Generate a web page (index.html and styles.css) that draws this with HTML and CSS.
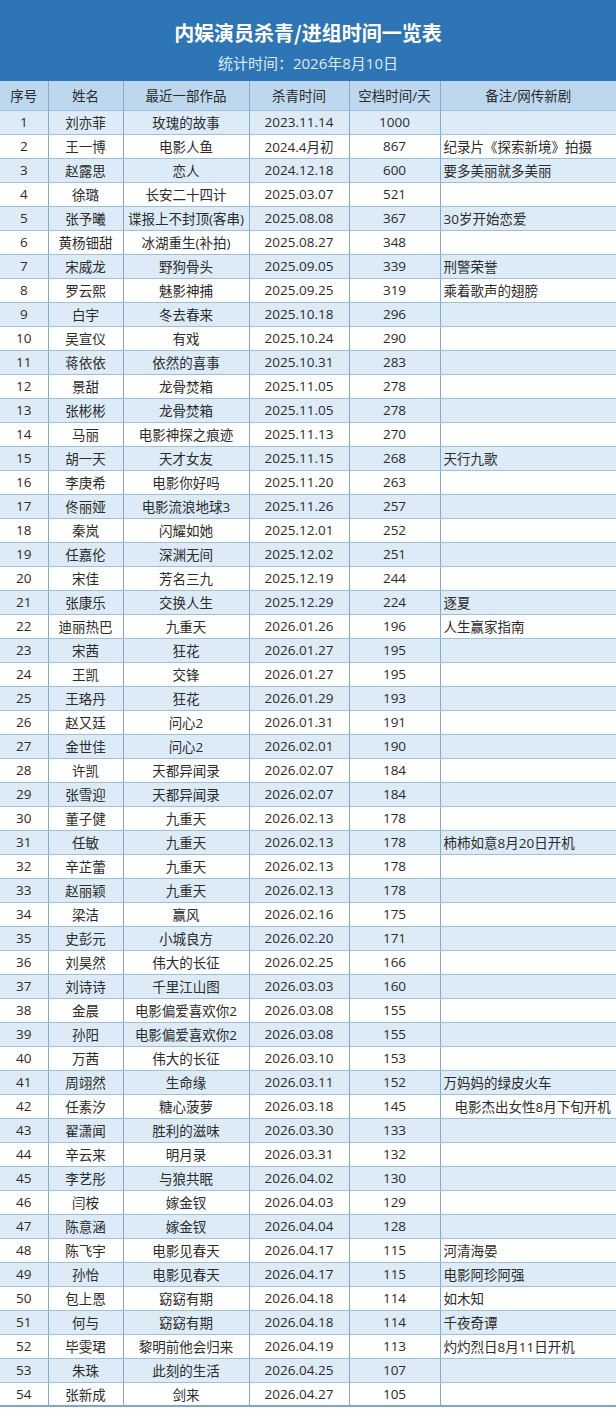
FILE: index.html
```html
<!DOCTYPE html>
<html lang="zh-CN">
<head>
<meta charset="utf-8">
<title>内娱演员杀青/进组时间一览表</title>
<link rel="stylesheet" href="styles.css">
</head>
<body>
<div class="sheet">
  <header class="banner">
    <h1 class="title">内娱演员杀青/进组时间一览表</h1>
    <p class="subtitle">统计时间：2026年8月10日</p>
  </header>
  <table class="grid">
    <colgroup>
      <col class="c-no"><col class="c-name"><col class="c-work"><col class="c-date"><col class="c-gap"><col class="c-note">
    </colgroup>
    <thead>
      <tr><th>序号</th><th>姓名</th><th>最近一部作品</th><th>杀青时间</th><th>空档时间/天</th><th>备注/网传新剧</th></tr>
    </thead>
    <tbody>
      <tr><td>1</td><td>刘亦菲</td><td>玫瑰的故事</td><td>2023.11.14</td><td>1000</td><td class="note"></td></tr>
      <tr><td>2</td><td>王一博</td><td>电影人鱼</td><td>2024.4月初</td><td>867</td><td class="note">纪录片《探索新境》拍摄</td></tr>
      <tr><td>3</td><td>赵露思</td><td>恋人</td><td>2024.12.18</td><td>600</td><td class="note">要多美丽就多美丽</td></tr>
      <tr><td>4</td><td>徐璐</td><td>长安二十四计</td><td>2025.03.07</td><td>521</td><td class="note"></td></tr>
      <tr><td>5</td><td>张予曦</td><td>谍报上不封顶(客串)</td><td>2025.08.08</td><td>367</td><td class="note">30岁开始恋爱</td></tr>
      <tr><td>6</td><td>黄杨钿甜</td><td>冰湖重生(补拍)</td><td>2025.08.27</td><td>348</td><td class="note"></td></tr>
      <tr><td>7</td><td>宋威龙</td><td>野狗骨头</td><td>2025.09.05</td><td>339</td><td class="note">刑警荣誉</td></tr>
      <tr><td>8</td><td>罗云熙</td><td>魅影神捕</td><td>2025.09.25</td><td>319</td><td class="note">乘着歌声的翅膀</td></tr>
      <tr><td>9</td><td>白宇</td><td>冬去春来</td><td>2025.10.18</td><td>296</td><td class="note"></td></tr>
      <tr><td>10</td><td>吴宣仪</td><td>有戏</td><td>2025.10.24</td><td>290</td><td class="note"></td></tr>
      <tr><td>11</td><td>蒋依依</td><td>依然的喜事</td><td>2025.10.31</td><td>283</td><td class="note"></td></tr>
      <tr><td>12</td><td>景甜</td><td>龙骨焚箱</td><td>2025.11.05</td><td>278</td><td class="note"></td></tr>
      <tr><td>13</td><td>张彬彬</td><td>龙骨焚箱</td><td>2025.11.05</td><td>278</td><td class="note"></td></tr>
      <tr><td>14</td><td>马丽</td><td>电影神探之痕迹</td><td>2025.11.13</td><td>270</td><td class="note"></td></tr>
      <tr><td>15</td><td>胡一天</td><td>天才女友</td><td>2025.11.15</td><td>268</td><td class="note">天行九歌</td></tr>
      <tr><td>16</td><td>李庚希</td><td>电影你好吗</td><td>2025.11.20</td><td>263</td><td class="note"></td></tr>
      <tr><td>17</td><td>佟丽娅</td><td>电影流浪地球3</td><td>2025.11.26</td><td>257</td><td class="note"></td></tr>
      <tr><td>18</td><td>秦岚</td><td>闪耀如她</td><td>2025.12.01</td><td>252</td><td class="note"></td></tr>
      <tr><td>19</td><td>任嘉伦</td><td>深渊无间</td><td>2025.12.02</td><td>251</td><td class="note"></td></tr>
      <tr><td>20</td><td>宋佳</td><td>芳名三九</td><td>2025.12.19</td><td>244</td><td class="note"></td></tr>
      <tr><td>21</td><td>张康乐</td><td>交换人生</td><td>2025.12.29</td><td>224</td><td class="note">逐夏</td></tr>
      <tr><td>22</td><td>迪丽热巴</td><td>九重天</td><td>2026.01.26</td><td>196</td><td class="note">人生赢家指南</td></tr>
      <tr><td>23</td><td>宋茜</td><td>狂花</td><td>2026.01.27</td><td>195</td><td class="note"></td></tr>
      <tr><td>24</td><td>王凯</td><td>交锋</td><td>2026.01.27</td><td>195</td><td class="note"></td></tr>
      <tr><td>25</td><td>王珞丹</td><td>狂花</td><td>2026.01.29</td><td>193</td><td class="note"></td></tr>
      <tr><td>26</td><td>赵又廷</td><td>问心2</td><td>2026.01.31</td><td>191</td><td class="note"></td></tr>
      <tr><td>27</td><td>金世佳</td><td>问心2</td><td>2026.02.01</td><td>190</td><td class="note"></td></tr>
      <tr><td>28</td><td>许凯</td><td>天都异闻录</td><td>2026.02.07</td><td>184</td><td class="note"></td></tr>
      <tr><td>29</td><td>张雪迎</td><td>天都异闻录</td><td>2026.02.07</td><td>184</td><td class="note"></td></tr>
      <tr><td>30</td><td>董子健</td><td>九重天</td><td>2026.02.13</td><td>178</td><td class="note"></td></tr>
      <tr><td>31</td><td>任敏</td><td>九重天</td><td>2026.02.13</td><td>178</td><td class="note">柿柿如意8月20日开机</td></tr>
      <tr><td>32</td><td>辛芷蕾</td><td>九重天</td><td>2026.02.13</td><td>178</td><td class="note"></td></tr>
      <tr><td>33</td><td>赵丽颖</td><td>九重天</td><td>2026.02.13</td><td>178</td><td class="note"></td></tr>
      <tr><td>34</td><td>梁洁</td><td>赢风</td><td>2026.02.16</td><td>175</td><td class="note"></td></tr>
      <tr><td>35</td><td>史彭元</td><td>小城良方</td><td>2026.02.20</td><td>171</td><td class="note"></td></tr>
      <tr><td>36</td><td>刘昊然</td><td>伟大的长征</td><td>2026.02.25</td><td>166</td><td class="note"></td></tr>
      <tr><td>37</td><td>刘诗诗</td><td>千里江山图</td><td>2026.03.03</td><td>160</td><td class="note"></td></tr>
      <tr><td>38</td><td>金晨</td><td>电影偏爱喜欢你2</td><td>2026.03.08</td><td>155</td><td class="note"></td></tr>
      <tr><td>39</td><td>孙阳</td><td>电影偏爱喜欢你2</td><td>2026.03.08</td><td>155</td><td class="note"></td></tr>
      <tr><td>40</td><td>万茜</td><td>伟大的长征</td><td>2026.03.10</td><td>153</td><td class="note"></td></tr>
      <tr><td>41</td><td>周翊然</td><td>生命缘</td><td>2026.03.11</td><td>152</td><td class="note">万妈妈的绿皮火车</td></tr>
      <tr><td>42</td><td>任素汐</td><td>糖心菠萝</td><td>2026.03.18</td><td>145</td><td class="note indent">电影杰出女性8月下旬开机</td></tr>
      <tr><td>43</td><td>翟潇闻</td><td>胜利的滋味</td><td>2026.03.30</td><td>133</td><td class="note"></td></tr>
      <tr><td>44</td><td>辛云来</td><td>明月录</td><td>2026.03.31</td><td>132</td><td class="note"></td></tr>
      <tr><td>45</td><td>李艺彤</td><td>与狼共眠</td><td>2026.04.02</td><td>130</td><td class="note"></td></tr>
      <tr><td>46</td><td>闫桉</td><td>嫁金钗</td><td>2026.04.03</td><td>129</td><td class="note"></td></tr>
      <tr><td>47</td><td>陈意涵</td><td>嫁金钗</td><td>2026.04.04</td><td>128</td><td class="note"></td></tr>
      <tr><td>48</td><td>陈飞宇</td><td>电影见春天</td><td>2026.04.17</td><td>115</td><td class="note">河清海晏</td></tr>
      <tr><td>49</td><td>孙怡</td><td>电影见春天</td><td>2026.04.17</td><td>115</td><td class="note">电影阿珍阿强</td></tr>
      <tr><td>50</td><td>包上恩</td><td>窈窈有期</td><td>2026.04.18</td><td>114</td><td class="note">如木知</td></tr>
      <tr><td>51</td><td>何与</td><td>窈窈有期</td><td>2026.04.18</td><td>114</td><td class="note">千夜奇谭</td></tr>
      <tr><td>52</td><td>毕雯珺</td><td>黎明前他会归来</td><td>2026.04.19</td><td>113</td><td class="note">灼灼烈日8月11日开机</td></tr>
      <tr><td>53</td><td>朱珠</td><td>此刻的生活</td><td>2026.04.25</td><td>107</td><td class="note"></td></tr>
      <tr><td>54</td><td>张新成</td><td>剑来</td><td>2026.04.27</td><td>105</td><td class="note"></td></tr>
    </tbody>
  </table>
</div>
</body>
</html>
```
FILE: styles.css
```css
html, body {
  margin: 0;
  padding: 0;
  background: #ffffff;
}

body {
  font-family: "Open Sans", "Noto Sans CJK SC", "Noto Sans", sans-serif;
  color: #2b2b2b;
}

.sheet {
  width: 616px;
}

.banner {
  height: 81px;
  box-sizing: border-box;
  padding-top: 19px;
  background: #2e75b6;
  display: flex;
  flex-direction: column;
  align-items: center;
  gap: 7px;
}

.title {
  margin: 0;
  font-family: "Noto Sans CJK SC", sans-serif;
  font-size: 20px;
  line-height: 27px;
  font-weight: 700;
  color: #ffffff;
}

.subtitle {
  margin: 0;
  font-size: 15px;
  line-height: 20px;
  color: #dfe9f5;
}

.grid {
  width: 616px;
  table-layout: fixed;
  border-collapse: collapse;
  font-size: 13.5px;
}

.c-no { width: 48px; }
.c-name { width: 75px; }
.c-work { width: 126px; }
.c-date { width: 100px; }
.c-gap { width: 91px; }
.c-note { width: 176px; }

.grid th,
.grid td {
  padding: 0;
  text-align: center;
  white-space: nowrap;
  overflow: hidden;
  border: 1px solid #a0bfdb;
  border-left-color: #82aacd;
  border-right-color: #82aacd;
  font-weight: 400;
}

.grid th:first-child,
.grid td:first-child {
  border-left: none;
}

.grid th:last-child,
.grid td:last-child {
  border-right: none;
}

.grid thead tr {
  height: 29px;
  background: #bdd7ee;
}

.grid th {
  border-top: none;
  font-size: 13.5px;
  color: #2b2b2b;
}

.grid tbody tr {
  height: 24px;
}

.grid tbody tr:nth-child(odd) {
  background: #ddebf7;
}

.grid tbody tr:nth-child(even) {
  background: #ffffff;
}

.grid tbody tr:last-child td {
  border-bottom: 2px solid #7ea6c8;
}

.grid td.note {
  text-align: left;
  padding-left: 3px;
}

.grid td.indent {
  padding-left: 14px;
}
```
